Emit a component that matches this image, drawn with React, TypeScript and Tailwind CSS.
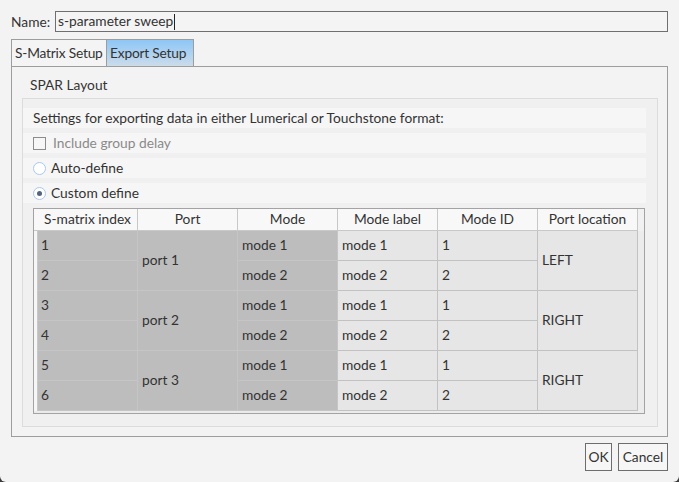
const headers = ["S-matrix index", "Port", "Mode", "Mode label", "Mode ID", "Port location"];

const groups = [
  { port: "port 1", location: "LEFT", rows: [["1", "mode 1", "mode 1", "1"], ["2", "mode 2", "mode 2", "2"]] },
  { port: "port 2", location: "RIGHT", rows: [["3", "mode 1", "mode 1", "1"], ["4", "mode 2", "mode 2", "2"]] },
  { port: "port 3", location: "RIGHT", rows: [["5", "mode 1", "mode 1", "1"], ["6", "mode 2", "mode 2", "2"]] },
];

function SparTable() {
  return (
    <div className="ml-[10px] mr-[1px] flex h-[206px] border border-[#a3a3a3] bg-[#ebebeb]">
      {/* vertical header strip */}
      <div className="flex w-[4px] flex-col">
        <div className="h-[22px] border-b border-[#c8c8c8] bg-[#f8f8f8]" />
        <div className="h-[180px] border-r border-[#c8c8c8] bg-[#f6f6f6]" />
      </div>

      <div className="flex flex-col">
        <div className="grid grid-cols-[100px_100px_100px_100px_100px_100px] grid-rows-[22px_repeat(6,30px)]">
          {headers.map((h) => (
            <div
              key={h}
              className="flex items-center justify-center whitespace-nowrap border-b border-r border-[#c8c8c8] bg-[#f8f8f8]"
            >
              {h}
            </div>
          ))}

          {groups.map((g, gi) =>
            g.rows.map((r, ri) => (
              <>
                <div
                  key={`i-${gi}-${ri}`}
                  className="flex items-center border-b border-r border-[#c5c5c5] bg-[#bdbdbd] pl-[3px]"
                  style={{ gridColumn: 1, gridRow: 2 + gi * 2 + ri }}
                >
                  {r[0]}
                </div>
                {ri === 0 && (
                  <div
                    key={`p-${gi}`}
                    className="flex items-center border-b border-r border-[#c5c5c5] bg-[#bdbdbd] pl-[4px]"
                    style={{ gridColumn: 2, gridRow: `${2 + gi * 2} / span 2` }}
                  >
                    {g.port}
                  </div>
                )}
                <div
                  key={`m-${gi}-${ri}`}
                  className="flex items-center border-b border-r border-[#c5c5c5] bg-[#bdbdbd] pl-[4px]"
                  style={{ gridColumn: 3, gridRow: 2 + gi * 2 + ri }}
                >
                  {r[1]}
                </div>
                <div
                  key={`l-${gi}-${ri}`}
                  className="flex items-center border-b border-r border-[#c2c2c2] bg-[#e6e6e6] pl-[4px]"
                  style={{ gridColumn: 4, gridRow: 2 + gi * 2 + ri }}
                >
                  {r[2]}
                </div>
                <div
                  key={`d-${gi}-${ri}`}
                  className="flex items-center border-b border-r border-[#c2c2c2] bg-[#e6e6e6] pl-[4px]"
                  style={{ gridColumn: 5, gridRow: 2 + gi * 2 + ri }}
                >
                  {r[3]}
                </div>
                {ri === 0 && (
                  <div
                    key={`o-${gi}`}
                    className="flex items-center border-b border-r border-[#c2c2c2] bg-[#e6e6e6] pl-[4px]"
                    style={{ gridColumn: 6, gridRow: `${2 + gi * 2} / span 2` }}
                  >
                    {g.location}
                  </div>
                )}
              </>
            ))
          )}
        </div>
      </div>

      {/* filler right of last column */}
      <div className="flex flex-1 flex-col">
        <div className="h-[22px] bg-[#f1f1f1]" />
        <div className="flex-1 bg-[#ececec]" />
      </div>
    </div>
  );
}

export default function App() {
  return (
    <div
      className="h-[482px] w-[679px] bg-[#3c3c3c] text-[13.75px] text-[#333333]"
      style={{ fontFamily: "Lato, 'Noto Sans', sans-serif" }}
    >
      <div className="flex h-full w-full flex-col rounded-b-[6px] bg-[#f3f3f3]">
        {/* Name row */}
        <div className="flex h-[32px] items-end pl-[11px]">
          <span className="w-[44px] leading-[21px]">Name:</span>
          <div className="flex h-[21px] w-[613px] items-center border border-[#6f6f6f] bg-[#f4f4f4] pl-[2px]">
            <span>s-parameter sweep</span>
            <span className="ml-[1px] h-[16px] w-[1px] bg-[#222]" />
          </div>
        </div>

        {/* Tabs */}
        <div className="ml-[11px] mt-[7px] flex h-[27px] whitespace-nowrap">
          <div className="flex w-[96px] items-center border border-b-0 border-[#9d9d9d] bg-[#f4f4f4] pl-[3px] tracking-[-0.2px]">
            S-Matrix Setup
          </div>
          <div className="flex w-[87px] items-center border border-b-0 border-l-0 border-[#9d9d9d] bg-gradient-to-b from-[#8ec6f6] to-[#cbdcea] pl-[3px] tracking-[-0.2px]">
            Export Setup
          </div>
        </div>

        {/* Tab pane */}
        <div className="ml-[11px] flex h-[371px] w-[657px] flex-col border border-[#9d9d9d]">
          <div className="ml-[18px] mt-[8px] h-[20px] leading-[20px]">SPAR Layout</div>

          <div className="ml-[10px] mt-[3px] flex h-[329px] w-[636px] flex-col gap-[5px] border border-[#dcdcdc] bg-[#f0f0f0] pr-[11px] pt-[9px]">
            <div className="flex h-[20px] items-center bg-[#f6f6f6] pl-[10px]">
              Settings for exporting data in either Lumerical or Touchstone format:
            </div>
            <div className="flex h-[20px] items-center bg-[#f6f6f6] pl-[10px] text-[#8a8a8a]">
              <span className="mr-[7px] h-[13px] w-[13px] border border-[#8c8c8c] bg-[#f6f6f6]" />
              Include group delay
            </div>
            <div className="flex h-[20px] items-center bg-[#f6f6f6] pl-[10px]">
              <span className="mr-[5px] h-[13px] w-[13px] rounded-full border border-[#a9c9ea] bg-white" />
              Auto-define
            </div>
            <div className="flex h-[20px] items-center bg-[#f6f6f6] pl-[10px]">
              <span className="mr-[5px] flex h-[13px] w-[13px] items-center justify-center rounded-full border border-[#a9c9ea] bg-white">
                <span className="h-[5px] w-[5px] rounded-full bg-[#56627e]" />
              </span>
              Custom define
            </div>
            <SparTable />
          </div>
        </div>

        {/* Buttons */}
        <div className="mt-[6px] flex justify-end gap-[6px] pr-[11px]">
          <button className="h-[28px] w-[27px] border border-[#6d6d6d] bg-[#f6f6f6]">OK</button>
          <button className="h-[28px] w-[50px] border border-[#6d6d6d] bg-[#f6f6f6]">Cancel</button>
        </div>
      </div>
    </div>
  );
}
